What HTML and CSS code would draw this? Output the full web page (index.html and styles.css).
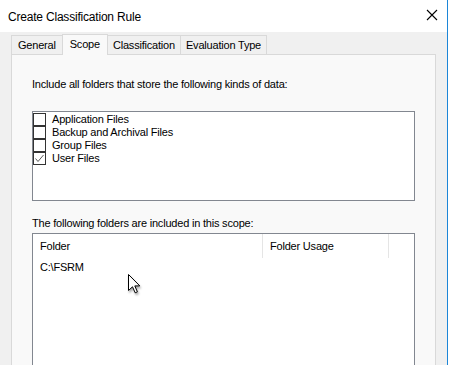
FILE: index.html
```html
<!DOCTYPE html>
<html lang="en">
<head>
  <meta charset="UTF-8">
  <title>Create Classification Rule</title>
  <link rel="stylesheet" href="styles.css">
</head>
<body>
  <div class="window">
    <div class="titlebar">
      <span class="title">Create Classification Rule</span>
      <svg class="close" width="12" height="12" viewBox="0 0 12 12">
        <path d="M1 1 L11 11 M11 1 L1 11" stroke="#000" stroke-width="1.1" fill="none"/>
      </svg>
    </div>

    <div class="tabs">
      <div class="tab">General</div>
      <div class="tab active">Scope</div>
      <div class="tab">Classification</div>
      <div class="tab">Evaluation Type</div>
    </div>

    <div class="panel">
      <p class="label first">Include all folders that store the following kinds of data:</p>

      <!-- kinds of data -->
      <div class="checklist">
        <div class="check-item"><span class="checkbox"></span>Application Files</div>
        <div class="check-item"><span class="checkbox"></span>Backup and Archival Files</div>
        <div class="check-item"><span class="checkbox"></span>Group Files</div>
        <div class="check-item">
          <span class="checkbox">
            <svg width="11" height="11" viewBox="0 0 11 11">
              <path d="M1.5 5.5 L4 8.5 L9.5 2" stroke="#5a5a5a" stroke-width="1" fill="none"/>
            </svg>
          </span>User Files
        </div>
      </div>

      <p class="label">The following folders are included in this scope:</p>

      <div class="listview">
        <div class="list-header">
          <div class="col col-folder">Folder</div>
          <div class="col col-usage">Folder Usage</div>
          <div class="col col-rest"></div>
        </div>
        <div class="list-row">C:\FSRM</div>
      </div>
    </div>

    <svg class="cursor" width="16" height="22" viewBox="0 0 16 22">
      <path d="M0.5 0.5 L0.5 16.5 L4.5 12.8 L7.2 18.8 L9.4 17.8 L6.8 11.9 L11.8 11.9 Z" fill="#fff" stroke="#000" stroke-width="1"/>
    </svg>
  </div>
</body>
</html>
```

FILE: styles.css
```css
body {
  margin: 0;
  width: 450px;
  height: 365px;
  overflow: hidden;
  background-color: #fff;
  font-family: "Liberation Sans", Arial, sans-serif;
  font-size: 11px;
  letter-spacing: -0.2px;
  color: #000;
}
.window {
  position: relative;
  width: 447px;
  height: 365px;
  background-color: #f0f0f0;
  border-right: 1px solid #1c86d8;
}
.titlebar {
  height: 32px;
  background-color: #fff;
  display: flex;
  align-items: center;
  justify-content: space-between;
  padding: 0 8px 0 8px;
}
.title {
  margin-top: 1px;
  font-size: 12px;
}
.close {
  margin-right: 1px;
  margin-top: -2px;
}
.tabs {
  display: flex;
  align-items: flex-end;
  height: 22px;
  padding-left: 11px;
  position: relative;
  z-index: 1;
}
.tab {
  height: 18px;
  line-height: 19px;
  padding: 0 5px;
  border: 1px solid #d9d9d9;
  border-bottom: none;
  border-left: none;
  background-color: #f0f0f0;
  color: #000;
}
.tab:first-child {
  padding: 0 6px;
  border-left: 1px solid #d9d9d9;
}
.tab.active {
  height: 20px;
  line-height: 18px;
  margin-bottom: -1px;
  border-left: 1px solid #d9d9d9;
  margin-left: -1px;
  padding: 0 7px;
  background-color: #f9f9f9;
}
.tab.active + .tab {
  border-left: none;
}
.panel {
  margin-left: 11px;
  width: 383px;
  height: 320px;
  border: 1px solid #d9d9d9;
  background-color: #f9f9f9;
  padding: 0 20px;
}
.label {
  margin: 0;
  line-height: 15px;
}
.label.first {
  padding-top: 22px;
}
.checklist {
  margin-top: 19px;
  height: 90px;
  box-sizing: border-box;
  border: 1px solid #828790;
  background-color: #fff;
  padding-top: 1px;
}
.check-item {
  display: flex;
  align-items: center;
  height: 13px;
  line-height: 13px;
}
.checkbox {
  width: 11px;
  height: 11px;
  border: 1px solid #333;
  background-color: #fff;
  margin-right: 6px;
  display: flex;
  align-items: center;
  justify-content: center;
}
.checklist + .label {
  margin-top: 15px;
}
.listview {
  margin-top: 2px;
  height: 140px;
  border: 1px solid #828790;
  background-color: #fff;
}
.list-header {
  display: flex;
  height: 24px;
}
.col {
  padding-left: 7px;
  line-height: 24px;
  border-right: 1px solid #e5e5e5;
}
.col-folder {
  width: 222px;
}
.col-usage {
  width: 118px;
}
.col-rest {
  border-right: none;
}
.list-row {
  padding-left: 7px;
  line-height: 17px;
  margin-top: 1px;
}
.cursor {
  position: absolute;
  left: 128px;
  top: 274px;
  filter: drop-shadow(1px 2px 1px rgba(0, 0, 0, 0.35));
}
```
